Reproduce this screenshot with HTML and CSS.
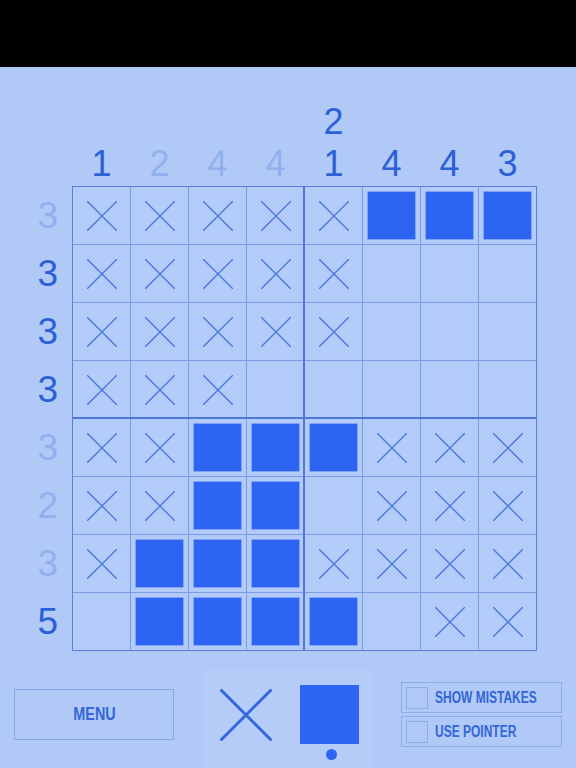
FILE: index.html
```html
<!DOCTYPE html>
<html>
<head>
<meta charset="utf-8">
<link rel="stylesheet" href="styles.css">
</head>
<body>
<div class="topbar"></div>
<div class="colclues">
  <div class="cc"><span>1</span></div>
  <div class="cc done"><span>2</span></div>
  <div class="cc done"><span>4</span></div>
  <div class="cc done"><span>4</span></div>
  <div class="cc"><span>2</span><span>1</span></div>
  <div class="cc"><span>4</span></div>
  <div class="cc"><span>4</span></div>
  <div class="cc"><span>3</span></div>
</div>
<div class="board">
  <div class="rowclues">
    <div class="rc done">3</div>
    <div class="rc">3</div>
    <div class="rc">3</div>
    <div class="rc">3</div>
    <div class="rc done">3</div>
    <div class="rc done">2</div>
    <div class="rc done">3</div>
    <div class="rc">5</div>
  </div>
  <div class="grid">
    <!-- row 1 -->
    <div class="cell x"><svg viewBox="0 0 30 30"><path d="M0 0L30 30M30 0L0 30"/></svg></div>
    <div class="cell x"><svg viewBox="0 0 30 30"><path d="M0 0L30 30M30 0L0 30"/></svg></div>
    <div class="cell x"><svg viewBox="0 0 30 30"><path d="M0 0L30 30M30 0L0 30"/></svg></div>
    <div class="cell x"><svg viewBox="0 0 30 30"><path d="M0 0L30 30M30 0L0 30"/></svg></div>
    <div class="cell x"><svg viewBox="0 0 30 30"><path d="M0 0L30 30M30 0L0 30"/></svg></div>
    <div class="cell f"><i></i></div>
    <div class="cell f"><i></i></div>
    <div class="cell f"><i></i></div>
    <!-- row 2 -->
    <div class="cell x"><svg viewBox="0 0 30 30"><path d="M0 0L30 30M30 0L0 30"/></svg></div>
    <div class="cell x"><svg viewBox="0 0 30 30"><path d="M0 0L30 30M30 0L0 30"/></svg></div>
    <div class="cell x"><svg viewBox="0 0 30 30"><path d="M0 0L30 30M30 0L0 30"/></svg></div>
    <div class="cell x"><svg viewBox="0 0 30 30"><path d="M0 0L30 30M30 0L0 30"/></svg></div>
    <div class="cell x"><svg viewBox="0 0 30 30"><path d="M0 0L30 30M30 0L0 30"/></svg></div>
    <div class="cell"></div>
    <div class="cell"></div>
    <div class="cell"></div>
    <!-- row 3 -->
    <div class="cell x"><svg viewBox="0 0 30 30"><path d="M0 0L30 30M30 0L0 30"/></svg></div>
    <div class="cell x"><svg viewBox="0 0 30 30"><path d="M0 0L30 30M30 0L0 30"/></svg></div>
    <div class="cell x"><svg viewBox="0 0 30 30"><path d="M0 0L30 30M30 0L0 30"/></svg></div>
    <div class="cell x"><svg viewBox="0 0 30 30"><path d="M0 0L30 30M30 0L0 30"/></svg></div>
    <div class="cell x"><svg viewBox="0 0 30 30"><path d="M0 0L30 30M30 0L0 30"/></svg></div>
    <div class="cell"></div>
    <div class="cell"></div>
    <div class="cell"></div>
    <!-- row 4 -->
    <div class="cell x"><svg viewBox="0 0 30 30"><path d="M0 0L30 30M30 0L0 30"/></svg></div>
    <div class="cell x"><svg viewBox="0 0 30 30"><path d="M0 0L30 30M30 0L0 30"/></svg></div>
    <div class="cell x"><svg viewBox="0 0 30 30"><path d="M0 0L30 30M30 0L0 30"/></svg></div>
    <div class="cell"></div>
    <div class="cell"></div>
    <div class="cell"></div>
    <div class="cell"></div>
    <div class="cell"></div>
    <!-- row 5 -->
    <div class="cell x"><svg viewBox="0 0 30 30"><path d="M0 0L30 30M30 0L0 30"/></svg></div>
    <div class="cell x"><svg viewBox="0 0 30 30"><path d="M0 0L30 30M30 0L0 30"/></svg></div>
    <div class="cell f"><i></i></div>
    <div class="cell f"><i></i></div>
    <div class="cell f"><i></i></div>
    <div class="cell x"><svg viewBox="0 0 30 30"><path d="M0 0L30 30M30 0L0 30"/></svg></div>
    <div class="cell x"><svg viewBox="0 0 30 30"><path d="M0 0L30 30M30 0L0 30"/></svg></div>
    <div class="cell x"><svg viewBox="0 0 30 30"><path d="M0 0L30 30M30 0L0 30"/></svg></div>
    <!-- row 6 -->
    <div class="cell x"><svg viewBox="0 0 30 30"><path d="M0 0L30 30M30 0L0 30"/></svg></div>
    <div class="cell x"><svg viewBox="0 0 30 30"><path d="M0 0L30 30M30 0L0 30"/></svg></div>
    <div class="cell f"><i></i></div>
    <div class="cell f"><i></i></div>
    <div class="cell"></div>
    <div class="cell x"><svg viewBox="0 0 30 30"><path d="M0 0L30 30M30 0L0 30"/></svg></div>
    <div class="cell x"><svg viewBox="0 0 30 30"><path d="M0 0L30 30M30 0L0 30"/></svg></div>
    <div class="cell x"><svg viewBox="0 0 30 30"><path d="M0 0L30 30M30 0L0 30"/></svg></div>
    <!-- row 7 -->
    <div class="cell x"><svg viewBox="0 0 30 30"><path d="M0 0L30 30M30 0L0 30"/></svg></div>
    <div class="cell f"><i></i></div>
    <div class="cell f"><i></i></div>
    <div class="cell f"><i></i></div>
    <div class="cell x"><svg viewBox="0 0 30 30"><path d="M0 0L30 30M30 0L0 30"/></svg></div>
    <div class="cell x"><svg viewBox="0 0 30 30"><path d="M0 0L30 30M30 0L0 30"/></svg></div>
    <div class="cell x"><svg viewBox="0 0 30 30"><path d="M0 0L30 30M30 0L0 30"/></svg></div>
    <div class="cell x"><svg viewBox="0 0 30 30"><path d="M0 0L30 30M30 0L0 30"/></svg></div>
    <!-- row 8 -->
    <div class="cell"></div>
    <div class="cell f"><i></i></div>
    <div class="cell f"><i></i></div>
    <div class="cell f"><i></i></div>
    <div class="cell f"><i></i></div>
    <div class="cell"></div>
    <div class="cell x"><svg viewBox="0 0 30 30"><path d="M0 0L30 30M30 0L0 30"/></svg></div>
    <div class="cell x"><svg viewBox="0 0 30 30"><path d="M0 0L30 30M30 0L0 30"/></svg></div>
  </div>
</div>
<div class="controls">
  <div class="menu"><span>MENU</span></div>
  <div class="tools">
    <div class="tool-x"><svg viewBox="0 0 52 52"><path d="M1.5 1.5L50.5 50.5M50.5 1.5L1.5 50.5"/></svg></div>
    <div class="tool-fill">
      <div class="sq"></div>
      <div class="dot"></div>
    </div>
  </div>
  <div class="options">
    <div class="opt"><div class="box"></div><span>SHOW MISTAKES</span></div>
    <div class="opt"><div class="box"></div><span>USE POINTER</span></div>
  </div>
</div>
</body>
</html>
```

FILE: styles.css
```css
html, body {
  margin: 0;
  padding: 0;
}
body {
  width: 576px;
  height: 768px;
  overflow: hidden;
  background: #b1c9f7;
  font-family: "Liberation Sans", Arial, sans-serif;
  color: #2b60d6;
}
.topbar {
  height: 67px;
  background: #000;
}
.colclues {
  display: flex;
  gap: 1px;
  height: 118px;
  padding-bottom: 1px;
  margin-left: 73px;
}
.cc {
  width: 57px;
  display: flex;
  flex-direction: column;
  justify-content: flex-end;
  align-items: center;
  font-size: 36px;
  line-height: 42px;
}
.done {
  color: #91b1ee;
}
.board {
  display: flex;
}
.rowclues {
  width: 72px;
  padding-top: 1px;
  display: flex;
  flex-direction: column;
  gap: 1px;
}
.rc {
  height: 57px;
  line-height: 58px;
  font-size: 37px;
  text-align: right;
  padding-right: 14px;
}
.grid {
  position: relative;
  display: grid;
  grid-template-columns: repeat(8, 57px);
  grid-auto-rows: 57px;
  gap: 1px;
  background: #7b9de0;
  border: 1px solid #5a80d7;
}
.grid::before {
  content: "";
  position: absolute;
  left: 230px;
  top: 0;
  width: 2px;
  height: 100%;
  background: #4f78d6;
}
.grid::after {
  content: "";
  position: absolute;
  top: 230px;
  left: 0;
  height: 2px;
  width: 100%;
  background: #4f78d6;
}
.cell {
  background: #b3cbf8;
  display: flex;
  align-items: center;
  justify-content: center;
}
.cell svg {
  width: 30px;
  height: 30px;
  display: block;
}
.cell svg path {
  stroke: #4c79d8;
  stroke-width: 1.4;
  fill: none;
}
.cell i {
  display: block;
  width: 47px;
  height: 47px;
  background: #2d64f1;
  box-shadow: 0 0 0 0.5px #4a7af0;
}
.controls {
  display: flex;
  align-items: flex-start;
  margin-top: 18px;
  height: 100px;
}
.menu {
  margin-top: 20px;
  margin-left: 14px;
  width: 160px;
  height: 51px;
  box-sizing: border-box;
  border: 1px solid #88a7e5;
  display: flex;
  align-items: center;
  justify-content: center;
  font-weight: bold;
  font-size: 18px;
  color: #3466d8;
}
.menu span {
  display: inline-block;
  transform: scaleX(0.8);
}
.tools {
  margin-left: 29px;
  width: 169px;
  height: 100px;
  background: #b5ccf8;
  display: flex;
  align-items: flex-start;
}
.tool-x {
  margin-left: 17px;
  margin-top: 20px;
  width: 52px;
  height: 52px;
}
.tool-x svg {
  display: block;
  width: 52px;
  height: 52px;
}
.tool-x path {
  stroke: #3466dc;
  stroke-width: 3;
  stroke-linecap: round;
  fill: none;
}
.tool-fill {
  margin-left: 28px;
  margin-top: 16px;
  display: flex;
  flex-direction: column;
  align-items: center;
  gap: 5px;
}
.sq {
  width: 59px;
  height: 59px;
  background: #2d64f1;
}
.dot {
  width: 11px;
  height: 11px;
  border-radius: 50%;
  background: #2d64f1;
  margin-left: 3px;
}
.options {
  margin-left: 29px;
  margin-top: 13px;
  display: flex;
  flex-direction: column;
  gap: 3px;
}
.opt {
  width: 161px;
  height: 31px;
  box-sizing: border-box;
  border: 1px solid #8fabe6;
  display: flex;
  align-items: center;
  padding-left: 4px;
  gap: 7px;
}
.box {
  flex: 0 0 22px;
  width: 22px;
  height: 22px;
  box-sizing: border-box;
  border: 1px solid #8fabe6;
}
.opt span {
  display: inline-block;
  font-weight: bold;
  font-size: 16px;
  color: #3466d8;
  transform: scaleX(0.75);
  transform-origin: left center;
  white-space: nowrap;
}
```
